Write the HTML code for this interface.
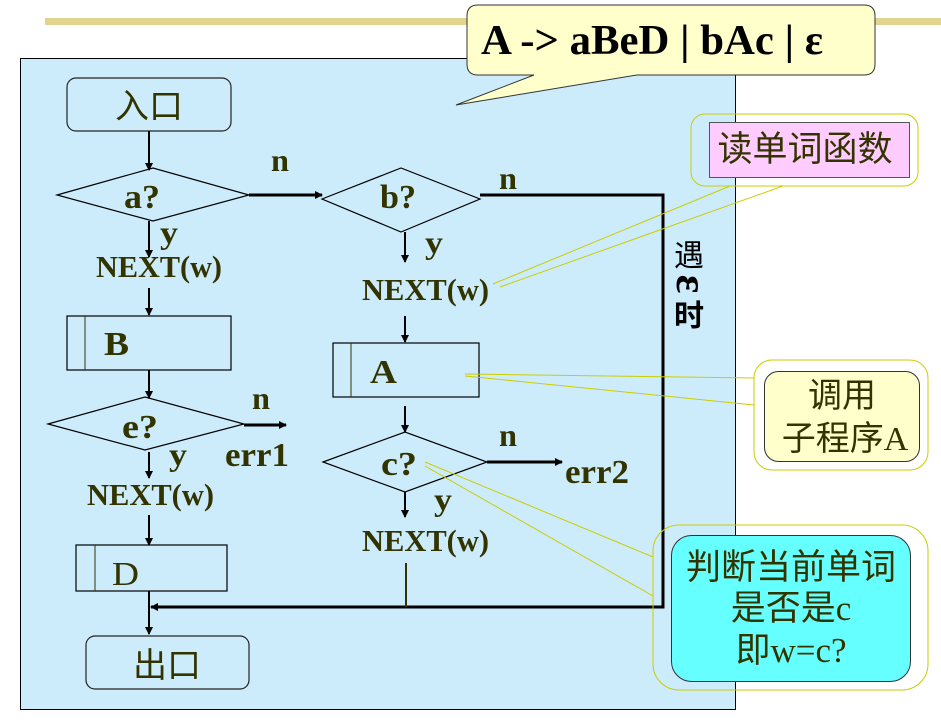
<!DOCTYPE html>
<html><head><meta charset="utf-8"><style>
html,body{margin:0;padding:0;background:#fff;width:941px;height:723px;overflow:hidden}
svg{display:block}
.t{font-family:"Liberation Serif","Noto Serif CJK SC",serif;font-weight:bold;fill:#333300}
.c{font-family:"Liberation Sans","Noto Sans CJK SC",sans-serif;fill:#333300}
</style></head><body>
<svg width="941" height="723" viewBox="0 0 941 723" xmlns="http://www.w3.org/2000/svg">
<defs><marker id="ar" markerWidth="8" markerHeight="8" refX="7" refY="4" orient="auto" markerUnits="userSpaceOnUse"><path d="M0,0 L8,4 L0,8 Z" fill="#000"/></marker></defs>
<rect x="45" y="18" width="896" height="7" fill="#E2D38E"/>
<rect x="20.5" y="58.5" width="715" height="651" fill="#CCECFC" stroke="#000" stroke-width="1"/>
<path d="M478,5 H864 Q875,5 875,16 V64 Q875,75 864,75 H637 L456,105 L534,75 H478 Q467,75 467,64 V16 Q467,5 478,5 Z" fill="#FFFFCC" stroke="#333" stroke-width="1"/>
<text class="t" x="481" y="54" font-size="42" textLength="342" lengthAdjust="spacingAndGlyphs" style="fill:#000">A -&gt; aBeD | bAc | ε</text>
<g fill="none" stroke="#000" stroke-width="1.2">
<rect x="67" y="78" width="164" height="53" rx="9" stroke="#222"/>
<rect x="86" y="636" width="163" height="53" rx="9" stroke="#222"/>
<path d="M57,195 L153,168 L249,195 L153,221 Z"/>
<path d="M322,199 L401,168 L480,199 L401,232 Z"/>
<path d="M48,424 L145,397 L244,424 L145,450 Z"/>
<path d="M323,462 L405,432 L487,462 L405,492 Z"/>
<rect x="67" y="316" width="164" height="54"/>
<rect x="333" y="343" width="146" height="54"/>
<rect x="76" y="545" width="151" height="46"/>
</g>
<g stroke="#333300" stroke-width="1"><line x1="85" y1="316" x2="85" y2="370"/><line x1="351" y1="343" x2="351" y2="397"/><line x1="95" y1="545" x2="95" y2="591"/></g>
<g stroke="#000" stroke-width="2" fill="none">
<line x1="149" y1="131" x2="149" y2="170" marker-end="url(#ar)"/>
<line x1="149" y1="221" x2="149" y2="257" marker-end="url(#ar)"/>
<line x1="149" y1="288" x2="149" y2="315" marker-end="url(#ar)"/>
<line x1="149" y1="370" x2="149" y2="398" marker-end="url(#ar)"/>
<line x1="149" y1="452" x2="149" y2="478" marker-end="url(#ar)"/>
<line x1="149" y1="515" x2="149" y2="545" marker-end="url(#ar)"/>
<line x1="149" y1="591" x2="149" y2="634" marker-end="url(#ar)"/>
<line x1="249" y1="195" x2="322" y2="195" stroke-width="3" marker-end="url(#ar)"/>
<line x1="244" y1="425" x2="286" y2="425" stroke-width="3" marker-end="url(#ar)"/>
<line x1="487" y1="462" x2="562" y2="462" stroke-width="3" marker-end="url(#ar)"/>
<line x1="405" y1="232" x2="405" y2="262" marker-end="url(#ar)"/>
<line x1="405" y1="316" x2="405" y2="342" marker-end="url(#ar)"/>
<line x1="405" y1="406" x2="405" y2="432" marker-end="url(#ar)"/>
<line x1="405" y1="492" x2="405" y2="517" marker-end="url(#ar)"/>
<polyline points="480,195 663,195 663,607 151,607" stroke-width="3" marker-end="url(#ar)"/>
</g>
<line x1="406" y1="563" x2="406" y2="607" stroke="#333300" stroke-width="2"/>
<text class="c" x="149" y="118" font-size="34" text-anchor="middle">入口</text>
<text class="c" x="167" y="677" font-size="34" text-anchor="middle">出口</text>
<g class="t">
<text x="124" y="208" font-size="34" textLength="36" lengthAdjust="spacingAndGlyphs">a?</text>
<text x="380" y="208" font-size="34" textLength="36" lengthAdjust="spacingAndGlyphs">b?</text>
<text x="122" y="438" font-size="34" textLength="36" lengthAdjust="spacingAndGlyphs">e?</text>
<text x="381" y="475" font-size="34" textLength="36" lengthAdjust="spacingAndGlyphs">c?</text>
<text x="271" y="171" font-size="32" textLength="18" lengthAdjust="spacingAndGlyphs">n</text>
<text x="499" y="189" font-size="32" textLength="18" lengthAdjust="spacingAndGlyphs">n</text>
<text x="252" y="409" font-size="32" textLength="18" lengthAdjust="spacingAndGlyphs">n</text>
<text x="499" y="446" font-size="32" textLength="18" lengthAdjust="spacingAndGlyphs">n</text>
<text x="160" y="243" font-size="32" textLength="18" lengthAdjust="spacingAndGlyphs">y</text>
<text x="425" y="253" font-size="32" textLength="18" lengthAdjust="spacingAndGlyphs">y</text>
<text x="169" y="465" font-size="32" textLength="18" lengthAdjust="spacingAndGlyphs">y</text>
<text x="434" y="510" font-size="32" textLength="18" lengthAdjust="spacingAndGlyphs">y</text>
<text x="96" y="277" font-size="31" textLength="126" lengthAdjust="spacingAndGlyphs">NEXT(w)</text>
<text x="362" y="300" font-size="31" textLength="127" lengthAdjust="spacingAndGlyphs">NEXT(w)</text>
<text x="87" y="505" font-size="31" textLength="127" lengthAdjust="spacingAndGlyphs">NEXT(w)</text>
<text x="362" y="551" font-size="31" textLength="127" lengthAdjust="spacingAndGlyphs">NEXT(w)</text>
<text x="225" y="466" font-size="34" textLength="64" lengthAdjust="spacingAndGlyphs">err1</text>
<text x="565" y="483" font-size="34" textLength="64" lengthAdjust="spacingAndGlyphs">err2</text>
<text x="104" y="355" font-size="34" textLength="25" lengthAdjust="spacingAndGlyphs">B</text>
<text x="370" y="383" font-size="34" textLength="27" lengthAdjust="spacingAndGlyphs">A</text>
<text x="112" y="585" font-size="34" font-weight="normal" textLength="27" lengthAdjust="spacingAndGlyphs">D</text>
</g>
<text class="c" x="689" y="266" font-size="30" text-anchor="middle" style="fill:#000">遇</text>
<text x="689" y="296" font-size="44" font-family="Liberation Serif,serif" font-weight="bold" text-anchor="middle" transform="rotate(90 689 284)">ε</text>
<text class="c" x="689" y="326" font-size="30" text-anchor="middle" style="fill:#000;font-weight:bold">时</text>
<g stroke="#CCCC00" stroke-width="1" fill="none">
<line x1="730" y1="186" x2="493" y2="284"/><line x1="783" y1="186" x2="500" y2="287"/>
<line x1="465" y1="374" x2="754" y2="378"/><line x1="465" y1="376" x2="754" y2="405"/>
<line x1="425" y1="462" x2="653" y2="557"/><line x1="425" y1="466" x2="653" y2="596"/>
<rect x="691" y="114" width="227" height="72" rx="14"/>
<rect x="754" y="360" width="174" height="110" rx="18"/>
<rect x="653" y="525" width="275" height="165" rx="26"/>
</g>
<rect x="709.5" y="122.5" width="200" height="55" fill="#FFCCFF" stroke="#555" stroke-width="1"/>
<text class="c" x="805" y="161" font-size="35" text-anchor="middle">读单词函数</text>
<rect x="764.5" y="371.5" width="155" height="90" rx="14" fill="#FFFFCC" stroke="#333" stroke-width="1"/>
<text class="c" x="842" y="407" font-size="34" text-anchor="middle">调用</text>
<text class="c" x="845" y="450" font-size="34" text-anchor="middle">子程序<tspan font-family="Liberation Serif,serif">A</tspan></text>
<rect x="671.5" y="535.5" width="239" height="146" rx="20" fill="#66FFFF" stroke="#333" stroke-width="1"/>
<text class="c" x="791" y="579" font-size="35" text-anchor="middle">判断当前单词</text>
<text class="c" x="791" y="620" font-size="35" text-anchor="middle">是否是<tspan font-family="Liberation Serif,serif">c</tspan></text>
<text class="c" x="791" y="662" font-size="35" text-anchor="middle">即<tspan font-family="Liberation Serif,serif">w=c?</tspan></text>
</svg>
</body></html>
